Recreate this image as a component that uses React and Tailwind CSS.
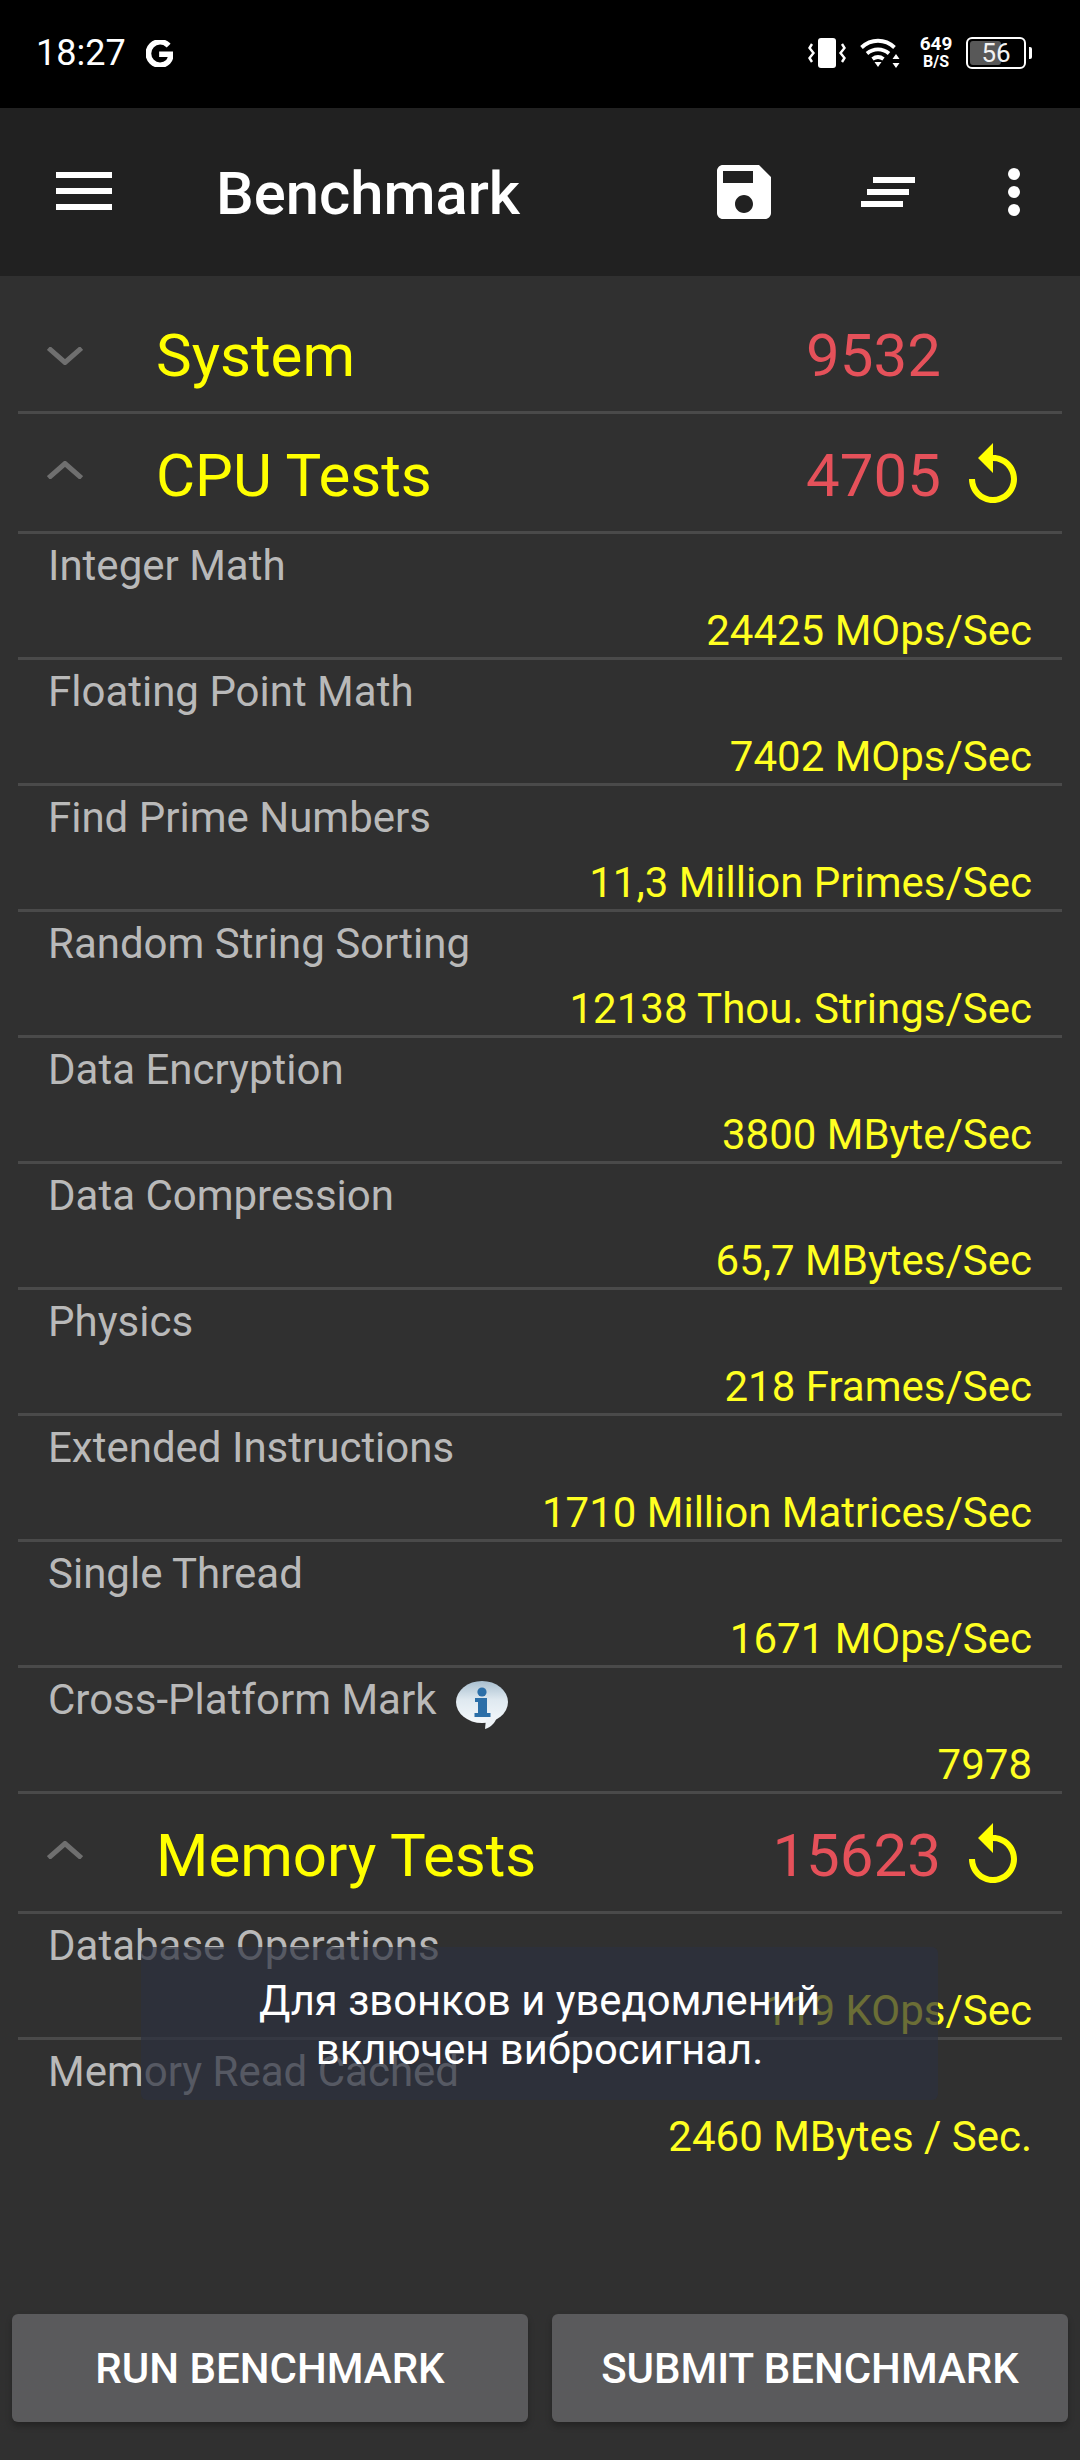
import React from "react";

function Chevron({ up }) {
  return (
    <svg viewBox="0 0 36 18" className={"w-[36px] h-[18px] shrink-0 " + (up ? "mt-[-5px]" : "mt-[6px]")} fill="none" stroke="#6f6f6f" strokeWidth="5">
      {up ? <path d="M1.5 17L18 2.5 34.5 17" /> : <path d="M1.5 1L18 15.5 34.5 1" />}
    </svg>
  );
}

function Replay() {
  return (
    <svg viewBox="0 0 24 24" className="w-[72px] h-[72px] shrink-0" fill="#ffff00">
      <path d="M12 5V1L7 6l5 5V7c3.31 0 6 2.69 6 6s-2.69 6-6 6-6-2.69-6-6H4c0 4.42 3.58 8 8 8s8-3.58 8-8-3.58-8-8-8z" />
    </svg>
  );
}

function Section({ title, score, open }) {
  return (
    <div className="mx-[18px] flex items-center border-b-[3px] border-[#4a4a4a] h-[120px]">
      <div className="w-[138px] pl-[29px] flex items-center"><Chevron up={open} /></div>
      <div className="flex-1 text-[60px] leading-[68px] text-[#ffff00] mt-[6px]">{title}</div>
      <div className="text-[60px] leading-[68px] text-[#e5515a] mt-[6px]">{score}</div>
      <div className="w-[121px] pl-[16px] flex items-center mt-[6px]">{open && <Replay />}</div>
    </div>
  );
}

function InfoIcon() {
  return (
    <svg viewBox="0 0 52 50" className="w-[52px] h-[50px] ml-[20px] mt-[6px]">
      <defs>
        <linearGradient id="bub" x1="0" y1="0" x2="0" y2="1">
          <stop offset="0" stopColor="#a9bfcf" />
          <stop offset="0.45" stopColor="#dfe9f0" />
          <stop offset="1" stopColor="#f4f8fb" />
        </linearGradient>
      </defs>
      <ellipse cx="26" cy="21" rx="26" ry="21" fill="url(#bub)" />
      <path d="M30 38l-1 10c6-2 10-6 12-12z" fill="#eef3f7" />
      <circle cx="26" cy="11" r="4.6" fill="#2c6fa8" />
      <path d="M19 17h12v15h3.5v4h-16v-4H22V21h-3z" fill="#2c6fa8" />
    </svg>
  );
}

function Item({ label, value, info, last }) {
  return (
    <div className={"mx-[18px] h-[126px] flex flex-col justify-between " + (last ? "pb-[3px]" : "border-b-[3px] border-[#4a4a4a]")}>
      <div className="flex items-start pl-[30px] pt-[7px] text-[42px] leading-[50px] text-[#b9b9b9]">
        <span>{label}</span>
        {info && <InfoIcon />}
      </div>
      <div className="pr-[30px] pb-[1px] text-right text-[42px] leading-[50px] text-[#ffff22]">{value}</div>
    </div>
  );
}

export default function App() {
  const cpu = [
    ["Integer Math", "24425 MOps/Sec"],
    ["Floating Point Math", "7402 MOps/Sec"],
    ["Find Prime Numbers", "11,3 Million Primes/Sec"],
    ["Random String Sorting", "12138 Thou. Strings/Sec"],
    ["Data Encryption", "3800 MByte/Sec"],
    ["Data Compression", "65,7 MBytes/Sec"],
    ["Physics", "218 Frames/Sec"],
    ["Extended Instructions", "1710 Million Matrices/Sec"],
    ["Single Thread", "1671 MOps/Sec"],
  ];
  return (
    <div className="relative w-[1080px] h-[2460px] bg-[#303030] flex flex-col overflow-hidden font-['Roboto',sans-serif]">
      {/* status bar */}
      <div className="h-[108px] bg-black flex items-center justify-between pl-[36px] pr-[48px] pb-[2px] text-white shrink-0">
        <div className="flex items-center gap-[20px]">
          <span className="text-[36px] leading-[40px]">18:27</span>
          <svg viewBox="0 0 24 24" className="w-[27px] h-[27px]" fill="#fff" stroke="#fff" strokeWidth="1.6">
            <path d="M12.48 10.92v3.28h7.84c-.24 1.84-.853 3.187-1.787 4.133-1.147 1.147-2.933 2.4-6.053 2.4-4.827 0-8.6-3.893-8.6-8.72s3.773-8.72 8.6-8.72c2.6 0 4.507 1.027 5.907 2.347l2.307-2.307C18.747 1.44 16.133 0 12.48 0 5.867 0 .307 5.387.307 12s5.56 12 12.173 12c3.573 0 6.267-1.173 8.373-3.36 2.16-2.16 2.84-5.213 2.84-7.667 0-.76-.053-1.467-.173-2.053H12.48z" />
          </svg>
        </div>
        <div className="flex items-center">
          <svg viewBox="0 0 38 30" className="w-[38px] h-[30px] mr-[14px]" fill="none" stroke="#fff" strokeWidth="2.4">
            <rect x="10" y="0" width="18" height="30" rx="3" fill="#fff" stroke="none" />
            <path d="M4 6L1.5 10 5.5 15 1.5 20 4 24" />
            <path d="M34 6l2.5 4-4 5 4 5-2.500 4" />
          </svg>
          <svg viewBox="0 0 40 30" className="w-[40px] h-[30px] mr-[18px]" fill="none" stroke="#fff" strokeWidth="3.800">
            <path d="M1.500 9.500C11 .5 25 .5 34.500 9.500" />
            <path d="M7 15.500c6.500-5.500 15.500-5.500 22 0" />
            <path d="M12.500 21c3.500-2.500 7.500-2.500 11 0" />
            <path d="M14.500 24h7L18 29z" fill="#fff" stroke="none" />
            <path d="M36 16l3.500 5h-7zM36 30l3.500-5h-7z" fill="#fff" stroke="none" />
          </svg>
          <div className="w-[36px] flex flex-col items-center mr-[12px] font-bold text-white">
            <span className="text-[19px] leading-[18px] mt-[-1px]">649</span>
            <span className="text-[16px] leading-[16px] mt-[1px]">B/S</span>
          </div>
          <div className="relative w-[60px] h-[32px] border-[2.500px] border-white rounded-[6px] flex items-center">
            <div className="absolute left-[2px] top-[2px] bottom-[2px] w-[31px] bg-[#585858] rounded-[3px]" />
            <span className="relative w-full text-center text-[26px] leading-[28px] text-[#f2f2f2]">56</span>
          </div>
          <div className="w-[3px] h-[12px] ml-[3px] bg-white rounded-r-[2px]" />
        </div>
      </div>

      {/* app bar */}
      <div className="h-[168px] bg-[#212121] flex items-center shrink-0 text-white">
        <div className="w-[216px] pl-[56px] flex flex-col gap-[10px] mt-[-2px]">
          <div className="w-[56px] h-[6px] bg-white" />
          <div className="w-[56px] h-[6px] bg-white" />
          <div className="w-[56px] h-[6px] bg-white" />
        </div>
        <div className="flex-1 text-[59.75px] leading-[68px] font-medium mt-[4px]">Benchmark</div>
        <svg viewBox="0 0 24 24" className="w-[72px] h-[72px] mr-[81px]" fill="#fff">
          <path d="M17 3H5c-1.110 0-2 .9-2 2v14c0 1.100.89 2 2 2h14c1.100 0 2-.9 2-2V7l-4-4zm-5 16c-1.660 0-3-1.340-3-3s1.340-3 3-3 3 1.340 3 3-1.340 3-3 3zm3-10H5V5h10v4z" />
        </svg>
        <svg viewBox="0 0 54 30" className="w-[54px] h-[30px] mr-[93px]" fill="#fff">
          <rect x="12" y="0" width="42" height="6" />
          <rect x="6" y="12" width="42" height="6" />
          <rect x="0" y="24" width="42" height="6" />
        </svg>
        <div className="flex flex-col gap-[6px] mr-[60px]">
          <div className="w-[12px] h-[12px] rounded-full bg-white" />
          <div className="w-[12px] h-[12px] rounded-full bg-white" />
          <div className="w-[12px] h-[12px] rounded-full bg-white" />
        </div>
      </div>

      {/* content */}
      <div className="flex-1 pt-[18px] min-h-0">
        <Section title="System" score="9532" />
        <Section title="CPU Tests" score="4705" open />
        {cpu.map(([l, v]) => <Item key={l} label={l} value={v} />)}
        <Item label="Cross-Platform Mark" value="7978" info />
        <Section title="Memory Tests" score="15623" open />
        <Item label="Database Operations" value="119 KOps/Sec" />
        <Item label="Memory Read Cached" value="2460 MBytes / Sec." last />
      </div>

      {/* buttons */}
      <div className="flex gap-[24px] px-[12px] pb-[38px] shrink-0">
        <button className="flex-1 h-[108px] rounded-[6px] bg-[#5a5a5c] text-white text-[42px] font-medium shadow-[0_4px_6px_rgba(0,0,0,0.25)]">RUN BENCHMARK</button>
        <button className="flex-1 h-[108px] rounded-[6px] bg-[#5a5a5c] text-white text-[42px] font-medium shadow-[0_4px_6px_rgba(0,0,0,0.25)]">SUBMIT BENCHMARK</button>
      </div>

      {/* toast */}
      <div className="absolute left-[141px] top-[1947px] w-[797px] h-[153px] rounded-[6px] bg-[#2c303e]/70 flex flex-col items-center justify-center text-white text-[41.75px] leading-[49px] pt-[2px]">
        <span>Для звонков и уведомлений</span>
        <span>включен вибросигнал.</span>
      </div>
    </div>
  );
}
